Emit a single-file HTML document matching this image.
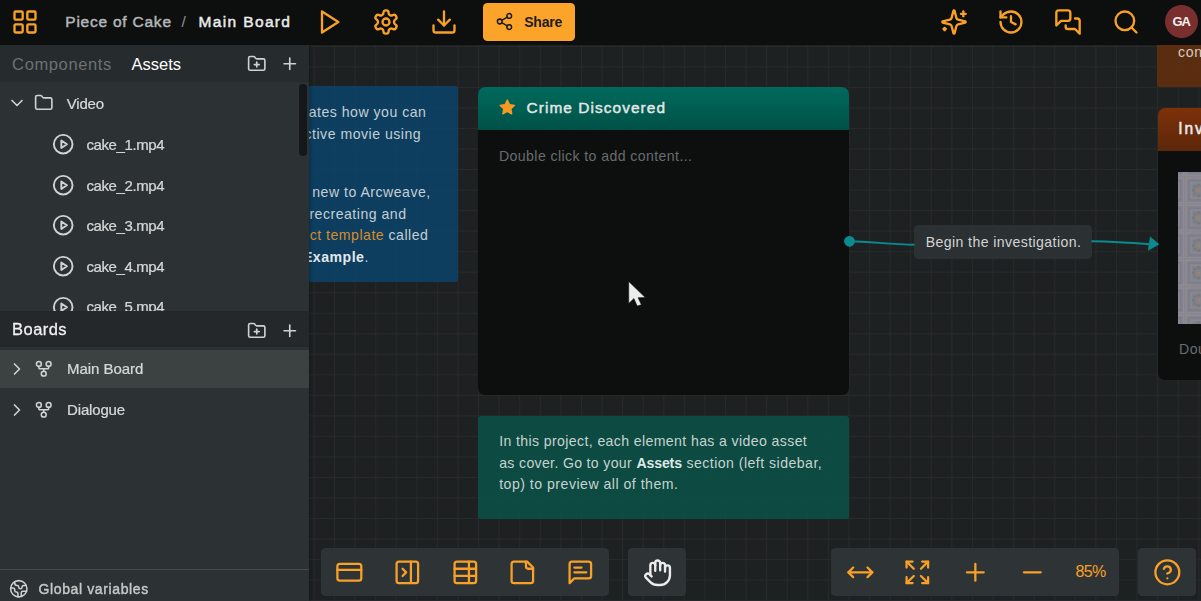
<!DOCTYPE html>
<html><head><meta charset="utf-8">
<style>
*{box-sizing:border-box;margin:0;padding:0}
html,body{width:1201px;height:601px;overflow:hidden;background:#1e2122;font-family:"Liberation Sans",sans-serif;}
.abs{position:absolute}
#canvas{position:absolute;left:0;top:45px;width:1201px;height:556px;background-color:#1e2122;overflow:hidden;
 background-image:linear-gradient(to right,#282a2a 1px,transparent 1px),linear-gradient(to bottom,#282a2a 1px,transparent 1px);
 background-size:20.593px 20.54px;background-position:4.8px 0.85px;}
#topbar{position:absolute;left:0;top:0;width:1201px;height:45px;background:#0d0f0f;}
#sidebar{position:absolute;left:0;top:45px;width:309px;height:556px;background:#2c3133;box-shadow:1px 0 4px rgba(0,0,0,.3)}
svg.ic{position:absolute;fill:none;stroke-linecap:round;stroke-linejoin:round;overflow:visible}
.o{stroke:#f9a126}
.g{stroke:#d0d2d2}
.t{position:absolute;white-space:pre;line-height:1}
.bar{position:absolute;background:#2e3436;border-radius:4.5px}
</style></head><body>
<svg width="0" height="0" style="position:absolute">
<defs>
<symbol id="i-grid" viewBox="0 0 24 24"><rect width="7" height="7" x="3" y="3" rx="1"/><rect width="7" height="7" x="14" y="3" rx="1"/><rect width="7" height="7" x="14" y="14" rx="1"/><rect width="7" height="7" x="3" y="14" rx="1"/></symbol>
<symbol id="i-play" viewBox="0 0 24 24"><polygon points="6 3 20 12 6 21 6 3"/></symbol>
<symbol id="i-gear" viewBox="0 0 24 24"><path d="M12.22 2h-.44a2 2 0 0 0-2 2v.18a2 2 0 0 1-1 1.73l-.43.25a2 2 0 0 1-2 0l-.15-.08a2 2 0 0 0-2.73.73l-.22.38a2 2 0 0 0 .73 2.73l.15.1a2 2 0 0 1 1 1.72v.51a2 2 0 0 1-1 1.74l-.15.09a2 2 0 0 0-.73 2.73l.22.38a2 2 0 0 0 2.73.73l.15-.08a2 2 0 0 1 2 0l.43.25a2 2 0 0 1 1 1.73V20a2 2 0 0 0 2 2h.44a2 2 0 0 0 2-2v-.18a2 2 0 0 1 1-1.73l.43-.25a2 2 0 0 1 2 0l.15.08a2 2 0 0 0 2.73-.73l.22-.39a2 2 0 0 0-.73-2.73l-.15-.08a2 2 0 0 1-1-1.74v-.5a2 2 0 0 1 1-1.74l.15-.09a2 2 0 0 0 .73-2.73l-.22-.38a2 2 0 0 0-2.73-.73l-.15.08a2 2 0 0 1-2 0l-.43-.25a2 2 0 0 1-1-1.73V4a2 2 0 0 0-2-2z"/><circle cx="12" cy="12" r="3"/></symbol>
<symbol id="i-dl" viewBox="0 0 24 24"><path d="M21 15v4a2 2 0 0 1-2 2H5a2 2 0 0 1-2-2v-4"/><polyline points="7 10 12 15 17 10"/><line x1="12" x2="12" y1="15" y2="3"/></symbol>
<symbol id="i-share" viewBox="0 0 24 24"><circle cx="18" cy="5" r="3"/><circle cx="6" cy="12" r="3"/><circle cx="18" cy="19" r="3"/><line x1="8.59" x2="15.42" y1="13.51" y2="17.49"/><line x1="15.41" x2="8.59" y1="6.51" y2="10.49"/></symbol>
<symbol id="i-spark" viewBox="0 0 24 24"><path d="M9.937 15.5A2 2 0 0 0 8.5 14.063l-6.135-1.582a.5.5 0 0 1 0-.962L8.5 9.936A2 2 0 0 0 9.937 8.5l1.582-6.135a.5.5 0 0 1 .963 0L14.063 8.5A2 2 0 0 0 15.5 9.937l6.135 1.581a.5.5 0 0 1 0 .964L15.5 14.063a2 2 0 0 0-1.437 1.437l-1.582 6.135a.5.5 0 0 1-.963 0z"/><path d="M20 3v4"/><path d="M22 5h-4"/><path d="M4 17v2"/><path d="M5 18H3"/></symbol>
<symbol id="i-hist" viewBox="0 0 24 24"><path d="M3 12a9 9 0 1 0 9-9 9.75 9.75 0 0 0-6.74 2.74L3 8"/><path d="M3 3v5h5"/><path d="M12 7v5l4 2"/></symbol>
<symbol id="i-msgs" viewBox="0 0 24 24"><path d="M14 9a2 2 0 0 1-2 2H6l-4 4V4c0-1.1.9-2 2-2h8a2 2 0 0 1 2 2z"/><path d="M18 9h2a2 2 0 0 1 2 2v11l-4-4h-6a2 2 0 0 1-2-2v-1"/></symbol>
<symbol id="i-search" viewBox="0 0 24 24"><circle cx="11" cy="11" r="8"/><path d="m21 21-4.3-4.3"/></symbol>
<symbol id="i-folderplus" viewBox="0 0 24 24"><path d="M12 10v6"/><path d="M9 13h6"/><path d="M20 20a2 2 0 0 0 2-2V8a2 2 0 0 0-2-2h-7.9a2 2 0 0 1-1.69-.9L9.6 3.9A2 2 0 0 0 7.93 3H4a2 2 0 0 0-2 2v13a2 2 0 0 0 2 2Z"/></symbol>
<symbol id="i-plus" viewBox="0 0 24 24"><path d="M5 12h14"/><path d="M12 5v14"/></symbol>
<symbol id="i-minus" viewBox="0 0 24 24"><path d="M5 12h14"/></symbol>
<symbol id="i-chevd" viewBox="0 0 24 24"><path d="m6 9 6 6 6-6"/></symbol>
<symbol id="i-chevr" viewBox="0 0 24 24"><path d="m9 18 6-6-6-6"/></symbol>
<symbol id="i-folder" viewBox="0 0 24 24"><path d="M20 20a2 2 0 0 0 2-2V8a2 2 0 0 0-2-2h-7.9a2 2 0 0 1-1.69-.9L9.6 3.9A2 2 0 0 0 7.93 3H4a2 2 0 0 0-2 2v13a2 2 0 0 0 2 2Z"/></symbol>
<symbol id="i-cplay" viewBox="0 0 24 24"><circle cx="12" cy="12" r="10"/><polygon points="10 8 16 12 10 16 10 8"/></symbol>
<symbol id="i-fork" viewBox="0 0 24 24"><circle cx="12" cy="18" r="3"/><circle cx="6" cy="6" r="3"/><circle cx="18" cy="6" r="3"/><path d="M18 9v2c0 .6-.4 1-1 1H7c-.6 0-1-.4-1-1V9"/><path d="M12 12v3"/></symbol>
<symbol id="i-earth" viewBox="0 0 24 24"><path d="M21.54 15H17a2 2 0 0 0-2 2v4.54"/><path d="M7 3.34V5a3 3 0 0 0 3 3a2 2 0 0 1 2 2c0 1.1.9 2 2 2a2 2 0 0 0 2-2c0-1.1.9-2 2-2h3.17"/><path d="M11 21.95V18a2 2 0 0 0-2-2a2 2 0 0 1-2-2v-1a2 2 0 0 0-2-2H2.05"/><circle cx="12" cy="12" r="10"/></symbol>
<symbol id="i-card" viewBox="0 0 24 24"><rect width="20" height="14" x="2" y="5" rx="2"/><line x1="2" x2="22" y1="10" y2="10"/></symbol>
<symbol id="i-panel" viewBox="0 0 24 24"><rect width="18" height="18" x="3" y="3" rx="2"/><path d="M15 3v18"/><path d="m8 9 3 3-3 3"/></symbol>
<symbol id="i-table" viewBox="0 0 24 24"><rect width="18" height="18" x="3" y="3" rx="2"/><path d="M3 9h18"/><path d="M3 15h18"/><path d="M15 3v18"/></symbol>
<symbol id="i-note" viewBox="0 0 24 24"><path d="M16 3H5a2 2 0 0 0-2 2v14a2 2 0 0 0 2 2h14a2 2 0 0 0 2-2V8Z"/><path d="M15 3v4a2 2 0 0 0 2 2h4"/></symbol>
<symbol id="i-msgt" viewBox="0 0 24 24"><path d="M21 15a2 2 0 0 1-2 2H7l-4 4V5a2 2 0 0 1 2-2h14a2 2 0 0 1 2 2z"/><path d="M13 8H7"/><path d="M17 12H7"/></symbol>
<symbol id="i-hand" viewBox="0 0 24 24"><path d="M18 11V6a2 2 0 0 0-2-2a2 2 0 0 0-2 2"/><path d="M14 10V4a2 2 0 0 0-2-2a2 2 0 0 0-2 2v2"/><path d="M10 10.5V6a2 2 0 0 0-2-2a2 2 0 0 0-2 2v8"/><path d="M18 8a2 2 0 1 1 4 0v6a8 8 0 0 1-8 8h-2c-2.8 0-4.5-.86-5.99-2.34l-3.6-3.6a2 2 0 0 1 2.83-2.82L7 15"/></symbol>
<symbol id="i-moveh" viewBox="0 0 24 24"><path d="m18 8 4 4-4 4"/><path d="M2 12h20"/><path d="m6 8-4 4 4 4"/></symbol>
<symbol id="i-expand" viewBox="0 0 24 24"><path d="m15 15 6 6"/><path d="m15 9 6-6"/><path d="M21 16v5h-5"/><path d="M21 8V3h-5"/><path d="M3 16v5h5"/><path d="m3 21 6-6"/><path d="M3 8V3h5"/><path d="M9 9 3 3"/></symbol>
<symbol id="i-help" viewBox="0 0 24 24"><circle cx="12" cy="12" r="10"/><path d="M9.09 9a3 3 0 0 1 5.83 1c0 2-3 3-3 3"/><path d="M12 17h.01"/></symbol>
</defs></svg>

<div id="canvas">
<!--CANVAS-->
</div>
<div id="cv" class="abs" style="left:0;top:0;width:1201px;height:601px;overflow:hidden">
<div class="abs" style="left:150px;top:86.3px;width:308.2px;height:195.4px;background:rgba(10,68,106,.86);border-radius:3px"></div>
<span class="t" style="right:774.60px;top:105.16px;font-size:14.1px;color:#c4ced4;letter-spacing:0.5px">This project demonstrates how you can</span>
<span class="t" style="right:779.90px;top:126.76px;font-size:14.1px;color:#c4ced4;letter-spacing:0.5px">create an interactive movie using</span>
<span class="t" style="right:770.30px;top:184.66px;font-size:14.1px;color:#c4ced4;letter-spacing:0.5px">If you are new to Arcweave,</span>
<span class="t" style="right:794.50px;top:207.16px;font-size:14.1px;color:#c4ced4;letter-spacing:0.5px">we suggest recreating and</span>
<span class="t" style="right:772.60px;top:228.36px;font-size:14.1px;color:#c4ced4;letter-spacing:0.5px"><span style="color:#d98b2b">the project template</span> called</span>
<span class="t" style="right:832.20px;top:249.96px;font-size:14.1px;color:#c4ced4;letter-spacing:0.5px"><b style="color:#e2e8eb">Basic Example</b>.</span>

<div class="abs" style="left:478px;top:86.6px;width:371.2px;height:308.3px;background:#0d0f0f;border-radius:7px;overflow:hidden">
<div class="abs" style="left:0;top:0;width:100%;height:43.3px;background:linear-gradient(#006a5c,#005147)"></div>
</div>
<svg class="abs" style="left:497.8px;top:97.6px" width="18.6" height="18.6" viewBox="0 0 24 24"><path fill="#f59a23" stroke="#f59a23" stroke-width="1.6" stroke-linejoin="round" d="M12 2.6l2.9 5.9 6.5.95-4.7 4.6 1.1 6.5L12 17.5l-5.8 3.05 1.1-6.5-4.7-4.6 6.5-.95z"/></svg>
<span class="t" style="left:526.60px;top:100.46px;font-size:15.4px;color:#e4e6e6;-webkit-text-stroke:0.46px #e4e6e6;letter-spacing:1.073px;">Crime Discovered</span>
<span class="t" style="left:499.00px;top:149.46px;font-size:14.1px;color:#686c6d;letter-spacing:0.414px;">Double click to add content...</span>

<div class="abs" style="left:478px;top:415.6px;width:371.2px;height:103px;background:rgba(9,82,72,.86);border-radius:3px"></div>
<span class="t" style="left:499.20px;top:434.26px;font-size:14.1px;color:#c6d3cf;letter-spacing:0.385px;">In this project, each element has a video asset</span>
<span class="t" style="left:499.20px;top:455.96px;font-size:14.1px;color:#c6d3cf;letter-spacing:0.338px;">as cover. Go to your </span>
<span class="t" style="left:636.60px;top:455.96px;font-size:14.1px;color:#dfe8e5;font-weight:700;letter-spacing:-0.167px;">Assets</span>
<span class="t" style="left:682.00px;top:455.96px;font-size:14.1px;color:#c6d3cf;letter-spacing:0.474px;"> section (left sidebar,</span>
<span class="t" style="left:499.20px;top:477.36px;font-size:14.1px;color:#c6d3cf;letter-spacing:0.496px;">top) to preview all of them.</span>

<svg class="abs" style="left:0;top:0;z-index:2" width="1201" height="601">
<path d="M849.5 241.3 C 870 241.6, 890 244.4, 914.5 244.8" fill="none" stroke="#0b8b91" stroke-width="1.9"/>
<path d="M1091.5 241.2 C 1110 241.4, 1130 242.6, 1150 244.2" fill="none" stroke="#0b8b91" stroke-width="1.9"/>
<circle cx="849.5" cy="241.3" r="5.4" fill="#0b8b91"/>
<path d="M1150.3 236.9 L1158.9 244.3 L1148.3 250.3 Z" fill="#0b8b91" stroke="#0b8b91" stroke-width="0.6" stroke-linejoin="round"/>
</svg>
<div class="abs" style="left:914.1px;top:225.4px;width:178px;height:33.3px;background:#2b3032;border-radius:4.5px"></div>
<span class="t" style="left:925.70px;top:235.16px;font-size:14.1px;color:#d2d4d4;letter-spacing:0.412px;">Begin the investigation.</span>

<div class="abs" style="left:1157.4px;top:30px;width:60px;height:57.4px;background:rgba(104,46,12,.82);border-radius:3px"></div>
<span class="t" style="left:1178.00px;top:44.56px;font-size:14.1px;color:#d9cbbf;letter-spacing:0.633px;">con</span>
<div class="abs" style="left:1157.6px;top:107.8px;width:60px;height:272.7px;background:#0d0f0f;border-radius:7px;overflow:hidden">
<div class="abs" style="left:0;top:0;width:100%;height:42.8px;background:linear-gradient(#7d3109,#5c270a)"></div>
</div>
<span class="t" style="left:1178.20px;top:121.29px;font-size:15.6px;color:#eeeeee;-webkit-text-stroke:0.47px #eeeeee;letter-spacing:1.894px;">Inv</span>
<svg class="abs" style="left:1178px;top:171.5px" width="23" height="152">
<defs><pattern id="tp" width="27.5" height="27.5" patternUnits="userSpaceOnUse" x="6.9" y="4.6">
<rect width="27.5" height="27.5" fill="#84828c"/>
<rect x="1.2" y="1.2" width="25.1" height="25.1" fill="none" stroke="#93919b" stroke-width="0.9"/>
<rect x="4" y="4" width="19.5" height="19.5" fill="none" stroke="#7a7882" stroke-width="0.8"/>
<rect x="6" y="6" width="15.5" height="15.5" fill="none" stroke="#908e98" stroke-width="0.7"/>
<g fill="#747a78"><circle cx="13.75" cy="8.6" r="1.7"/><circle cx="13.75" cy="18.9" r="1.7"/><circle cx="8.6" cy="13.75" r="1.7"/><circle cx="18.9" cy="13.75" r="1.7"/><circle cx="10" cy="10" r="1.4"/><circle cx="17.5" cy="10" r="1.4"/><circle cx="10" cy="17.5" r="1.4"/><circle cx="17.5" cy="17.5" r="1.4"/></g>
<circle cx="13.75" cy="13.75" r="1.3" fill="#aa8058"/>
<path d="M0 0h3M0 0v3M27.5 27.5h-3M27.5 27.5v-3" stroke="#9a8c80" stroke-width="0.8"/>
</pattern></defs>
<rect width="23" height="152" fill="url(#tp)"/>
</svg>
<span class="t" style="left:1178.90px;top:342.36px;font-size:14.1px;color:#686c6d;letter-spacing:0.570px;">Dou</span>

<div class="bar" style="left:321px;top:548px;width:288px;height:48px"></div>
<svg class="ic o" style="left:334.95px;top:558.05px" width="28.7" height="28.7" stroke-width="1.9"><use href="#i-card"/></svg>
<svg class="ic o" style="left:392.65px;top:557.95px" width="28.7" height="28.7" stroke-width="1.9"><use href="#i-panel"/></svg>
<svg class="ic o" style="left:450.95px;top:557.95px" width="28.7" height="28.7" stroke-width="1.9"><use href="#i-table"/></svg>
<svg class="ic o" style="left:508.15px;top:557.95px" width="28.7" height="28.7" stroke-width="1.9"><use href="#i-note"/></svg>
<svg class="ic o" style="left:566.05px;top:558.25px" width="28.7" height="28.7" stroke-width="1.9"><use href="#i-msgt"/></svg>
<div class="bar" style="left:628px;top:548px;width:58px;height:48px"></div>
<svg class="ic" style="left:642.6px;top:557.9px;stroke:#ececec" width="29.4" height="29.4" stroke-width="1.95"><use href="#i-hand"/></svg>
<div class="bar" style="left:831px;top:548px;width:288px;height:48px"></div>
<svg class="ic o" style="left:846.05px;top:558.05px" width="28.7" height="28.7" stroke-width="1.9"><use href="#i-moveh"/></svg>
<svg class="ic o" style="left:903.05px;top:557.85px" width="28.7" height="28.7" stroke-width="1.9"><use href="#i-expand"/></svg>
<svg class="ic o" style="left:960.95px;top:558.05px" width="28.7" height="28.7" stroke-width="1.9"><use href="#i-plus"/></svg>
<svg class="ic o" style="left:1018.05px;top:558.05px" width="28.7" height="28.7" stroke-width="1.9"><use href="#i-minus"/></svg>
<span class="t" style="left:1075.50px;top:563.86px;font-size:16px;color:#f9a126;letter-spacing:-0.666px;">85%</span>
<div class="bar" style="left:1138px;top:548px;width:58px;height:48px"></div>
<svg class="ic o" style="left:1152.95px;top:557.65px" width="28.7" height="28.7" stroke-width="1.9"><use href="#i-help"/></svg>

</div>
<div id="sidebar"></div>
<div id="sb" class="abs" style="left:0;top:0;width:309px;height:601px;overflow:hidden;will-change:transform">
<svg class="ic g" style="left:6.60px;top:93.10px" width="20" height="20" stroke-width="2"><use href="#i-chevd"/></svg>
<svg class="ic g" style="left:33.90px;top:93.35px" width="19.5" height="19.5" stroke-width="2"><use href="#i-folder"/></svg>
<span class="t" style="left:66.80px;top:96.30px;font-size:15px;color:#d6d8d8;-webkit-text-stroke:0.24px #d6d8d8;letter-spacing:-0.223px;">Video</span>
<svg class="ic g" style="left:51.60px;top:133.20px" width="22.4" height="22.4" stroke-width="2.05"><use href="#i-cplay"/></svg>
<span class="t" style="left:86.40px;top:136.90px;font-size:15px;color:#d6d8d8;-webkit-text-stroke:0.24px #d6d8d8;letter-spacing:-0.391px;">cake_1.mp4</span>
<svg class="ic g" style="left:51.60px;top:173.80px" width="22.4" height="22.4" stroke-width="2.05"><use href="#i-cplay"/></svg>
<span class="t" style="left:86.40px;top:177.50px;font-size:15px;color:#d6d8d8;-webkit-text-stroke:0.24px #d6d8d8;letter-spacing:-0.391px;">cake_2.mp4</span>
<svg class="ic g" style="left:51.60px;top:214.40px" width="22.4" height="22.4" stroke-width="2.05"><use href="#i-cplay"/></svg>
<span class="t" style="left:86.40px;top:218.10px;font-size:15px;color:#d6d8d8;-webkit-text-stroke:0.24px #d6d8d8;letter-spacing:-0.391px;">cake_3.mp4</span>
<svg class="ic g" style="left:51.60px;top:255.00px" width="22.4" height="22.4" stroke-width="2.05"><use href="#i-cplay"/></svg>
<span class="t" style="left:86.40px;top:258.70px;font-size:15px;color:#d6d8d8;-webkit-text-stroke:0.24px #d6d8d8;letter-spacing:-0.391px;">cake_4.mp4</span>
<svg class="ic g" style="left:51.60px;top:295.60px" width="22.4" height="22.4" stroke-width="2.05"><use href="#i-cplay"/></svg>
<span class="t" style="left:86.40px;top:299.30px;font-size:15px;color:#d6d8d8;-webkit-text-stroke:0.24px #d6d8d8;letter-spacing:-0.391px;">cake_5.mp4</span>
<div class="abs" style="left:299px;top:83.7px;width:8px;height:72px;border-radius:4px;background:#151818"></div>
<div class="abs" style="left:0;top:311.3px;width:309px;height:290px;background:#2c3133"></div>
<div class="abs" style="left:0;top:311.3px;width:309px;height:35.6px;background:#24282a"></div>
<span class="t" style="left:12.10px;top:321.03px;font-size:16.5px;color:#f2f2f2;-webkit-text-stroke:0.26px #f2f2f2;letter-spacing:0.444px;">Boards</span>
<svg class="ic g" style="left:246.85px;top:320.55px" width="19.5" height="19.5" stroke-width="2"><use href="#i-folderplus"/></svg>
<svg class="ic g" style="left:279.85px;top:320.55px" width="19.5" height="19.5" stroke-width="2"><use href="#i-plus"/></svg>
<div class="abs" style="left:0;top:350.3px;width:309px;height:37.5px;background:#3c4142"></div>
<svg class="ic g" style="left:6.80px;top:359.10px" width="20" height="20" stroke-width="2"><use href="#i-chevr"/></svg>
<svg class="ic g" style="left:33.95px;top:359.15px" width="19.5" height="19.5" stroke-width="1.9"><use href="#i-fork"/></svg>
<span class="t" style="left:67.10px;top:361.20px;font-size:15px;color:#d6d8d8;-webkit-text-stroke:0.24px #d6d8d8;letter-spacing:-0.058px;">Main Board</span>
<svg class="ic g" style="left:6.80px;top:399.70px" width="20" height="20" stroke-width="2"><use href="#i-chevr"/></svg>
<svg class="ic g" style="left:33.95px;top:399.75px" width="19.5" height="19.5" stroke-width="1.9"><use href="#i-fork"/></svg>
<span class="t" style="left:67.10px;top:401.80px;font-size:15px;color:#d6d8d8;-webkit-text-stroke:0.24px #d6d8d8;letter-spacing:-0.174px;">Dialogue</span>
<div class="abs" style="left:0;top:569.2px;width:309px;height:1px;background:#474b4c"></div>
<svg class="ic g" style="left:9.00px;top:578.80px" width="19.6" height="19.6" stroke-width="1.9"><use href="#i-earth"/></svg>
<span class="t" style="left:38.60px;top:581.95px;font-size:14px;color:#c6c8c8;-webkit-text-stroke:0.42px #c6c8c8;letter-spacing:0.614px;">Global variables</span>

</div>
<div id="topbar">
<div class="abs" style="left:0;top:45px;width:309px;height:36.5px;background:#262b2d"></div>
<span class="t" style="left:12.10px;top:56.03px;font-size:16.5px;color:#6c7273;letter-spacing:0.626px;">Components</span>
<span class="t" style="left:131.60px;top:56.03px;font-size:16.5px;color:#ffffff;letter-spacing:-0.026px;">Assets</span>
<svg class="ic g" style="left:246.75px;top:53.75px" width="19.5" height="19.5" stroke-width="2"><use href="#i-folderplus"/></svg>
<svg class="ic g" style="left:279.85px;top:53.95px" width="19.5" height="19.5" stroke-width="2"><use href="#i-plus"/></svg>
<svg class="ic o" style="left:11.30px;top:8.10px" width="28" height="28" stroke-width="2"><use href="#i-grid"/></svg>
<span class="t" style="left:65.30px;top:13.88px;font-size:15.5px;color:#b3b7b8;-webkit-text-stroke:0.46px #b3b7b8;letter-spacing:0.767px;">Piece of Cake</span>
<span class="t" style="left:181.60px;top:13.88px;font-size:15.5px;color:#8e9293;letter-spacing:1.188px;">/</span>
<span class="t" style="left:198.60px;top:13.88px;font-size:15.5px;color:#ececec;-webkit-text-stroke:0.46px #ececec;letter-spacing:1.348px;">Main Board</span>
<svg class="ic o" style="left:315.20px;top:8.00px" width="28" height="28" stroke-width="2"><use href="#i-play"/></svg>
<svg class="ic o" style="left:372.00px;top:8.00px" width="28" height="28" stroke-width="2"><use href="#i-gear"/></svg>
<svg class="ic o" style="left:430.10px;top:8.00px" width="28" height="28" stroke-width="2"><use href="#i-dl"/></svg>
<div class="abs" style="left:483px;top:3px;width:92px;height:37.5px;background:#fba429;border-radius:4.5px"></div>
<svg class="ic" style="left:495.35px;top:11.85px;stroke:#1c1c1c" width="19" height="19" stroke-width="1.9"><use href="#i-share"/></svg>
<span class="t" style="left:524.20px;top:14.65px;font-size:14px;color:#1c1c1c;font-weight:700;letter-spacing:-0.180px;">Share</span>
<svg class="ic o" style="left:939.50px;top:8.20px" width="28" height="28" stroke-width="2"><use href="#i-spark"/></svg>
<svg class="ic o" style="left:997.00px;top:8.00px" width="28" height="28" stroke-width="2"><use href="#i-hist"/></svg>
<svg class="ic o" style="left:1054.40px;top:8.00px" width="28" height="28" stroke-width="2"><use href="#i-msgs"/></svg>
<svg class="ic o" style="left:1112.00px;top:8.00px" width="28" height="28" stroke-width="2"><use href="#i-search"/></svg>
<div class="abs" style="left:1165px;top:4.7px;width:33.4px;height:33.4px;border-radius:50%;background:#7a2f2f"></div>
<span class="t" style="left:1172.60px;top:15.30px;font-size:13px;color:#f0f0f0;font-weight:700;letter-spacing:-1.300px;">GA</span>

</div>
<svg class="abs" style="left:0;top:0" width="1201" height="601"><path d="M628.7 281.4 L628.7 303.5 L633.9 298.6 L637.2 306.1 L641.4 304.7 L638.1 297.7 L645.3 297.6 Z" fill="#ececec" stroke="#0d0f0f" stroke-width="0.6"/></svg>
</body></html>
